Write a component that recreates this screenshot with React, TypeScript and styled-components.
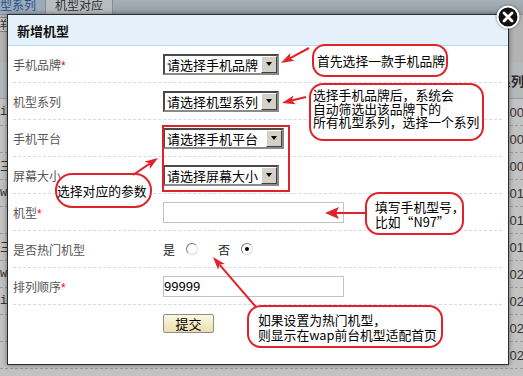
import styled, { createGlobalStyle } from 'styled-components';

const RED = '#e2222b';
const CJK = '"Noto Sans CJK SC", "Liberation Sans", sans-serif';

const GlobalStyle = createGlobalStyle`
  html, body { margin: 0; padding: 0; }
  body { background: #c0c0c0; font-family: ${CJK}; }
`;

// rows of the dimmed list page behind the dialog
const bgRows = [
  { left: 'i', num: '3100' },
  { left: '', num: '3100' },
  { left: '三', num: '3100' },
  { left: 'w', num: '3101' },
  { left: '', num: '3101' },
  { left: '三', num: '3101' },
  { left: 'w', num: '3102' },
  { left: 'i', num: '3102' },
  { left: '', num: '3102' },
  { left: '', num: '3102' },
];

type Arrow = { x1: number; y1: number; x2: number; y2: number; head?: number; half?: number };

const arrows: Arrow[] = [
  { x1: 309, y1: 48, x2: 281, y2: 63 },
  { x1: 306, y1: 97, x2: 282, y2: 103 },
  { x1: 133, y1: 175, x2: 158, y2: 158 },
  { x1: 366, y1: 213, x2: 325, y2: 213, head: 14, half: 6 },
  { x1: 256, y1: 307, x2: 213, y2: 257 },
];

function ArrowShape({ x1, y1, x2, y2, head = 13, half = 4.5 }: Arrow) {
  const len = Math.hypot(x2 - x1, y2 - y1);
  const ux = (x2 - x1) / len;
  const uy = (y2 - y1) / len;
  const nx = -uy;
  const ny = ux;
  const bx = x2 - ux * head;
  const by = y2 - uy * head;
  const notchX = bx + ux * 3;
  const notchY = by + uy * 3;
  const pts = [
    [x2, y2],
    [bx + nx * half, by + ny * half],
    [notchX, notchY],
    [bx - nx * half, by - ny * half],
  ]
    .map(p => p.join(','))
    .join(' ');
  return (
    <g>
      <line x1={x1} y1={y1} x2={notchX} y2={notchY} stroke={RED} strokeWidth={2} />
      <polygon points={pts} fill={RED} />
    </g>
  );
}

function App() {
  return (
    <>
      <GlobalStyle />
      <Page>
        <TabBar>
          <Tab $active>机型系列</Tab>
          <Tab>机型对应</Tab>
        </TabBar>
        <Toolbar>
          <ToolButton>详</ToolButton>
        </Toolbar>
        <BgTable>
          <BgHead>
            <BgLeft />
            <BgRight>型系列</BgRight>
          </BgHead>
          {bgRows.map((r, i) => (
            <BgRow key={i}>
              <BgLeft>{r.left}</BgLeft>
              <BgRight>{r.num}</BgRight>
            </BgRow>
          ))}
        </BgTable>

        <Dialog>
          <DialogHeader>新增机型</DialogHeader>
          <CloseButton>
            <svg width="24" height="24" viewBox="0 0 24 24">
              <circle cx="12" cy="12" r="10.5" fill="#111" stroke="#fff" strokeWidth="2" />
              <path d="M8 8 L16 16 M16 8 L8 16" stroke="#fff" strokeWidth="2.8" strokeLinecap="round" />
            </svg>
          </CloseButton>
          <Form>
            <Row>
              <Label>手机品牌<Req>*</Req></Label>
              <Select $w={116}>请选择手机品牌<Drop /></Select>
            </Row>
            <Row>
              <Label>机型系列</Label>
              <Select $w={116}>请选择机型系列<Drop /></Select>
            </Row>
            <Row>
              <Label>手机平台</Label>
              <Select $w={121}>请选择手机平台<Drop /></Select>
            </Row>
            <Row>
              <Label>屏幕大小</Label>
              <Select $w={116}>请选择屏幕大小<Drop /></Select>
            </Row>
            <Row>
              <Label>机型<Req>*</Req></Label>
              <TextInput />
            </Row>
            <Row>
              <Label>是否热门机型</Label>
              <Choice>是</Choice>
              <Radio />
              <Choice $gap>否</Choice>
              <Radio $checked />
            </Row>
            <Row>
              <Label>排列顺序<Req>*</Req></Label>
              <TextInput>99999</TextInput>
            </Row>
            <ButtonRow>
              <SubmitButton>提交</SubmitButton>
            </ButtonRow>
          </Form>
        </Dialog>

        <Notes>
          <Highlight />
          <Callout $x={312} $y={44} $w={136} $h={33} $r={13} $pad="0 0 0 3px">
            首先选择一款手机品牌
          </Callout>
          <Callout $x={309} $y={83} $w={175} $h={58} $r={14} $pad="3px 0 0 2px" $top>
            <span>选择手机品牌后，系统会</span>
            <span>自动筛选出该品牌下的</span>
            <span>所有机型系列，选择一个系列</span>
          </Callout>
          <Callout $x={55} $y={173} $w={97} $h={35} $r={17} $pad="0">
            选择对应的参数
          </Callout>
          <Callout $x={365} $y={192} $w={99} $h={43} $r={14} $pad="0 0 0 8px" $lh={15}>
            <span>填写手机型号，</span>
            <span>比如“N97”</span>
          </Callout>
          <Callout $x={247} $y={305} $w={196} $h={43} $r={14} $pad="0 0 0 9px" $lh={15}>
            <span>如果设置为热门机型，</span>
            <span>则显示在wap前台机型适配首页</span>
          </Callout>
          <ArrowLayer width="523" height="376" viewBox="0 0 523 376">
            {arrows.map((a, i) => (
              <ArrowShape key={i} {...a} />
            ))}
          </ArrowLayer>
        </Notes>
      </Page>
    </>
  );
}

export default App;

const Page = styled.div`
  position: relative;
  width: 523px;
  height: 376px;
  overflow: hidden;
  background: #c2c2c2;
  display: flex;
  flex-direction: column;
`;

const TabBar = styled.div`
  height: 14px;
  flex: none;
  display: flex;
  overflow: hidden;
  background: linear-gradient(#a7afb7, #959da5);
`;

const Tab = styled.div<{ $active?: boolean }>`
  height: 14px;
  box-sizing: border-box;
  padding: 0 9px 3px;
  display: flex;
  align-items: flex-end;
  font-size: 12px;
  line-height: 12px;
  color: ${p => (p.$active ? '#25508a' : '#2c2c2c')};
  background: ${p => (p.$active ? '#9dabb9' : '#b9bcc0')};
  border-right: 1px solid #878d93;
  margin-left: ${p => (p.$active ? '-21px' : '0')};
  white-space: nowrap;
`;

const Toolbar = styled.div`
  height: 48px;
  flex: none;
  box-sizing: border-box;
  border-top: 1px solid #8c9299;
  background: #b3b3b3;
  padding-top: 2px;
`;

const ToolButton = styled.div`
  width: 20px;
  height: 15px;
  margin-left: -12px;
  box-sizing: border-box;
  border: 1px solid #7d7d7d;
  background: #c6c6c6;
  font-size: 11px;
  line-height: 13px;
  color: #333;
  text-align: right;
`;

const BgTable = styled.div`
  display: flex;
  flex-direction: column;
`;

const BgHead = styled.div`
  height: 36px;
  display: flex;
  align-items: center;
  justify-content: space-between;
  background: #b5b8bb;
  border-bottom: 1px solid #9a9a9a;
  font-weight: bold;
  font-size: 13px;
  color: #2a2a2a;
`;

const BgRow = styled.div`
  height: 26px;
  display: flex;
  align-items: center;
  justify-content: space-between;
  border-bottom: 1px dashed #9c9c9c;
  font-size: 13px;
  color: #333;
`;

const BgLeft = styled.div`
  width: 7px;
  overflow: hidden;
  font-family: "Liberation Mono", ${CJK};
  font-size: 12px;
  text-align: center;
`;

const BgRight = styled.div`
  width: 60px;
  text-align: right;
  margin-right: -1px;
  font-family: "Liberation Sans", ${CJK};
  white-space: nowrap;
`;

const Dialog = styled.div`
  position: absolute;
  left: 7px;
  top: 14px;
  width: 502px;
  height: 351px;
  box-sizing: border-box;
  border: 1px solid #2b2b2b;
  background: #fff;
  box-shadow: 0 0 5px rgba(0, 0, 0, 0.45);
`;

const DialogHeader = styled.div`
  height: 30px;
  display: flex;
  align-items: center;
  padding-left: 9px;
  background: #e4f1fb;
  border-bottom: 1px solid #b4dbf3;
  font-size: 13px;
  font-weight: bold;
  color: #111;
`;

const CloseButton = styled.div`
  position: absolute;
  top: -10px;
  right: -12px;
  width: 24px;
  height: 24px;
  filter: drop-shadow(0 0 1px rgba(0, 0, 0, 0.6));
`;

const Form = styled.div`
  padding: 0 6px 0 5px;
`;

const Row = styled.div`
  height: 36px;
  display: flex;
  align-items: center;
  border-bottom: 1px dashed #d2dbe6;
`;

const ButtonRow = styled.div`
  padding: 9px 0 0 150px;
`;

const Label = styled.div`
  width: 150px;
  flex: none;
  box-sizing: border-box;
  font-size: 12px;
  color: #555;
`;

const Req = styled.span`
  color: #f00;
  font-family: "Liberation Sans", sans-serif;
`;

const Select = styled.div<{ $w: number }>`
  width: ${p => p.$w}px;
  height: 21px;
  box-sizing: border-box;
  border: 2px solid;
  border-color: #4a4a4a #8a8a8a #8a8a8a #4a4a4a;
  padding-left: 2px;
  display: flex;
  align-items: center;
  justify-content: space-between;
  background: #fff;
  font-size: 13px;
  color: #000;
  white-space: nowrap;
`;

const Drop = styled.span`
  width: 16px;
  height: 17px;
  flex: none;
  box-sizing: border-box;
  background: #d4d0c8;
  border: 1px solid;
  border-color: #fff #404040 #404040 #fff;
  display: flex;
  align-items: center;
  justify-content: center;

  &::after {
    content: '';
    border-left: 3.5px solid transparent;
    border-right: 3.5px solid transparent;
    border-top: 4px solid #000;
  }
`;

const TextInput = styled.div`
  width: 181px;
  height: 21px;
  box-sizing: border-box;
  border: 1px solid #c3c3c3;
  font-family: "Liberation Sans", ${CJK};
  font-size: 13px;
  line-height: 19px;
  color: #000;
`;

const Choice = styled.span<{ $gap?: boolean }>`
  font-size: 12px;
  color: #222;
  margin-left: ${p => (p.$gap ? '20px' : '0')};
`;

const Radio = styled.span<{ $checked?: boolean }>`
  width: 12px;
  height: 12px;
  margin-left: 11px;
  box-sizing: border-box;
  border-radius: 50%;
  border: 1px solid;
  border-color: #7a7a7a #dcdcdc #dcdcdc #7a7a7a;
  background: #fff;
  display: flex;
  align-items: center;
  justify-content: center;

  &::after {
    content: '';
    width: 4px;
    height: 4px;
    border-radius: 50%;
    background: ${p => (p.$checked ? '#000' : 'transparent')};
  }
`;

const SubmitButton = styled.div`
  width: 51px;
  height: 19px;
  box-sizing: border-box;
  border: 1px solid #8c8c8c;
  border-radius: 2px;
  background: linear-gradient(#fdf9e4, #ebdfaa);
  font-size: 13px;
  line-height: 17px;
  text-align: center;
  color: #000;
`;

const Notes = styled.div`
  position: absolute;
  inset: 0;
  pointer-events: none;
`;

const Highlight = styled.div`
  position: absolute;
  left: 162px;
  top: 125px;
  width: 128px;
  height: 67px;
  box-sizing: border-box;
  border: 2px solid ${RED};
`;

type CalloutProps = {
  $x: number;
  $y: number;
  $w: number;
  $h: number;
  $r: number;
  $pad: string;
  $top?: boolean;
  $lh?: number;
};

const Callout = styled.div<CalloutProps>`
  position: absolute;
  left: ${p => p.$x}px;
  top: ${p => p.$y}px;
  width: ${p => p.$w}px;
  height: ${p => p.$h}px;
  box-sizing: border-box;
  border: 2px solid ${RED};
  border-radius: ${p => p.$r}px;
  padding: ${p => p.$pad};
  background: #fff;
  display: flex;
  flex-direction: column;
  justify-content: ${p => (p.$top ? 'flex-start' : 'center')};
  font-size: 12.8px;
  line-height: ${p => p.$lh ?? 13.5}px;
  color: #000;
  white-space: nowrap;
`;

const ArrowLayer = styled.svg`
  position: absolute;
  left: 0;
  top: 0;
`;
